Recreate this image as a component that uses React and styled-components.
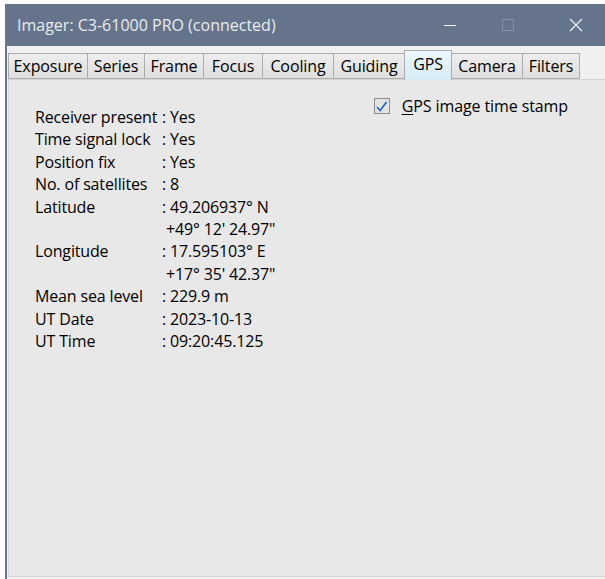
import { Fragment } from "react";
import styled, { createGlobalStyle } from "styled-components";

const GlobalStyle = createGlobalStyle`
  html, body {
    margin: 0;
    padding: 0;
    background: #ffffff;
    overflow: hidden;
    font-family: "Open Sans", "Noto Sans", sans-serif;
  }
`;

const Window = styled.div`
  margin: 4px 0 0 5px;
  width: 600px;
  height: 575px;
  display: flex;
  flex-direction: column;
  border-left: 2px solid #6a788c;
  box-sizing: border-box;
  background: #f0f0f0;
  overflow: hidden;
`;

const TitleBar = styled.div`
  height: 42px;
  flex: none;
  display: flex;
  align-items: center;
  background: #65748a;
  color: #e9ecf0;
  padding-left: 10px;
`;

const Title = styled.div`
  flex: 1;
  font-size: 16px;
`;

const Control = styled.div`
  width: 58px;
  height: 42px;
  display: flex;
  align-items: center;
  justify-content: center;
  padding-left: ${(p) => p.$shift || 0}px;
  color: ${(p) => (p.$dim ? "#8290a3" : "#eef1f5")};
`;

const Body = styled.div`
  flex: 1;
  display: flex;
  flex-direction: column;
  padding: 7px 0 2px 1px;
`;

const TabStrip = styled.div`
  display: flex;
  align-items: flex-end;
  height: 26px;
  position: relative;
  z-index: 1;
`;

const Tab = styled.div`
  width: ${(p) => p.$w}px;
  flex: none;
  height: ${(p) => (p.$active ? "30px" : "26px")};
  margin-bottom: ${(p) => (p.$active ? "-1px" : "0")};
  box-sizing: border-box;
  display: flex;
  align-items: center;
  justify-content: center;
  font-size: 16px;
  letter-spacing: -0.1px;
  color: #000000;
  border: 1px solid #adadad;
  border-bottom: ${(p) => (p.$active ? "none" : "1px solid #adadad")};
  margin-left: ${(p) => (p.$first ? "0" : "-1px")};
  background: ${(p) =>
    p.$active
      ? "linear-gradient(#eaf6fb, #d6ebf4)"
      : "linear-gradient(#eeeeee, #dedede)"};
  padding-bottom: ${(p) => (p.$active ? "4px" : "1px")};
`;

const Panel = styled.div`
  flex: 1;
  background: #e8e8e8;
  border: 1px solid #d5d5d5;
  border-right: none;
  display: flex;
  justify-content: space-between;
  padding: 16px 0 0 26px;
`;

const InfoGrid = styled.div`
  display: grid;
  grid-template-columns: 127px auto;
  grid-auto-rows: 22.4px;
  margin-top: 10px;
  font-size: 16px;
  letter-spacing: -0.15px;
  color: #000000;
  align-content: start;
`;

const Cell = styled.div`
  white-space: pre;
  line-height: 22px;
`;

const CheckRow = styled.label`
  display: flex;
  align-items: center;
  gap: 12px;
  height: 20px;
  margin-right: 37px;
  font-size: 16px;
  letter-spacing: -0.1px;
  color: #000000;
`;

const Box = styled.span`
  width: 14px;
  height: 14px;
  border: 1px solid #8d8d8d;
  background: #e2e2e2;
  display: flex;
  align-items: center;
  justify-content: center;
`;

const Underline = styled.span`
  text-decoration: underline;
  text-underline-offset: 2px;
`;

const tabs = [
  ["Exposure", 80],
  ["Series", 58],
  ["Frame", 60],
  ["Focus", 60],
  ["Cooling", 72],
  ["Guiding", 72],
  ["GPS", 48],
  ["Camera", 72],
  ["Filters", 58],
];

const rows = [
  ["Receiver present", ": Yes"],
  ["Time signal lock", ": Yes"],
  ["Position fix", ": Yes"],
  ["No. of satellites", ": 8"],
  ["Latitude", ": 49.206937° N"],
  ["", " +49° 12' 24.97\""],
  ["Longitude", ": 17.595103° E"],
  ["", " +17° 35' 42.37\""],
  ["Mean sea level", ": 229.9 m"],
  ["UT Date", ": 2023-10-13"],
  ["UT Time", ": 09:20:45.125"],
];

export default function App() {
  return (
    <>
      <GlobalStyle />
      <Window>
        <TitleBar>
          <Title>Imager: C3-61000 PRO (connected)</Title>
          <Control>
            <svg width="12" height="12" viewBox="0 0 12 12">
              <path d="M0 6.5h12" stroke="currentColor" strokeWidth="1" />
            </svg>
          </Control>
          <Control $dim>
            <svg width="12" height="12" viewBox="0 0 12 12">
              <rect x="0.5" y="0.5" width="11" height="11" fill="none" stroke="currentColor" />
            </svg>
          </Control>
          <Control $shift={10}>
            <svg width="14" height="14" viewBox="0 0 14 14">
              <path d="M1 1l12 12M13 1L1 13" stroke="currentColor" strokeWidth="1.2" />
            </svg>
          </Control>
        </TitleBar>
        <Body>
          <TabStrip>
            {tabs.map(([name, w], i) => (
              <Tab key={name} $first={i === 0} $w={w} $active={name === "GPS"}>
                {name}
              </Tab>
            ))}
          </TabStrip>
          <Panel>
            <InfoGrid>
              {rows.map(([label, value], i) => (
                <Fragment key={i}>
                  <Cell>{label}</Cell>
                  <Cell>{value}</Cell>
                </Fragment>
              ))}
            </InfoGrid>
            <CheckRow>
              <Box>
                <svg width="13" height="13" viewBox="0 0 13 13">
                  <path d="M2 7l3.2 3.5L11.5 2" fill="none" stroke="#1f62b8" strokeWidth="1.6" />
                </svg>
              </Box>
              <span>
                <Underline>G</Underline>PS image time stamp
              </span>
            </CheckRow>
          </Panel>
        </Body>
      </Window>
    </>
  );
}
